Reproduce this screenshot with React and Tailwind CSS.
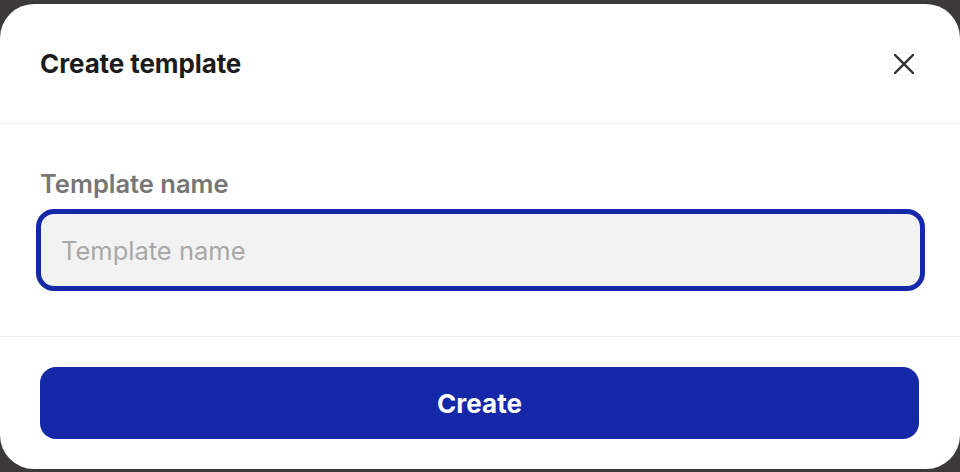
export default function App() {
  return (
    <div
      className="h-[472px] w-[960px] bg-[#3b3a38] pt-[4px]"
      style={{ fontFamily: "Inter, 'Noto Sans', sans-serif" }}
    >
      <div className="flex h-[465px] flex-col rounded-[34px] bg-white">
        <div className="flex h-[120px] items-center justify-between border-b border-[#efefef] pl-[40px] pr-[46px]">
          <h1 className="text-[26px] font-bold tracking-[-0.1px] text-[#1c1c1c]">
            Create template
          </h1>
          <button className="text-[#2b2b2b]">
            <svg width="20" height="20" viewBox="0 0 20 20" fill="none">
              <path
                d="M1 1L19 19M19 1L1 19"
                stroke="currentColor"
                strokeWidth="2.4"
                strokeLinecap="round"
              />
            </svg>
          </button>
        </div>

        <div className="flex h-[213px] flex-col border-b border-[#efefef] px-[36px] pt-[43px]">
          <label className="mb-[8px] pl-[4px] text-[25.5px] font-semibold leading-[34px] text-[#767676]">
            Template name
          </label>
          <input
            className="h-[82px] w-[889px] rounded-[18px] border-[5px] border-[#1428a8] bg-[#f2f2f2] px-[20px] text-[25.5px] text-[#222] outline-none placeholder:text-[#a8a8a8]"
            placeholder="Template name"
          />
        </div>

        <div className="flex flex-1 px-[40px] pt-[30px]">
          <button className="h-[72px] w-[879px] rounded-[16px] bg-[#1428a8] text-[26px] font-bold text-white">
            Create
          </button>
        </div>
      </div>
    </div>
  );
}
